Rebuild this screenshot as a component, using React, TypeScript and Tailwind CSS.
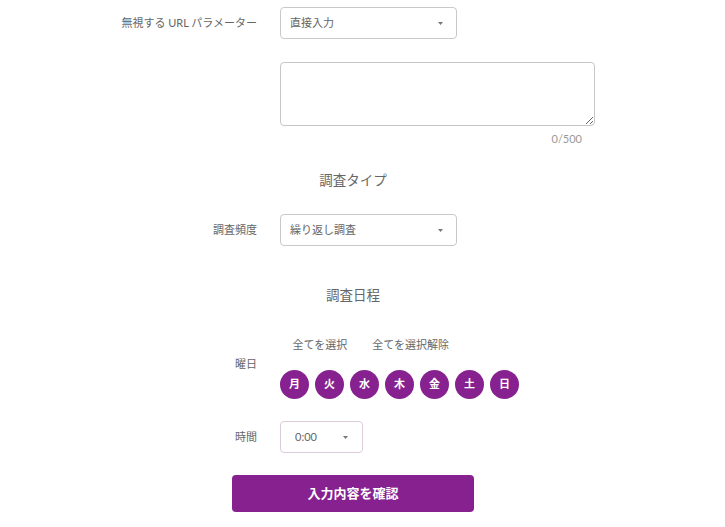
import React from "react";

const font = { fontFamily: 'Lato, "Noto Sans CJK JP", sans-serif' };

const days = ["月", "火", "水", "木", "金", "土", "日"];

function Caret() {
  return (
    <svg width="5" height="3" viewBox="0 0 5 3" className="shrink-0">
      <path d="M0 0h5L2.5 3z" fill="#777" />
    </svg>
  );
}

function Select({ value, width, className = "" }: { value: string; width: string; className?: string }) {
  return (
    <div
      className={`flex h-[32px] items-center justify-between rounded-[4px] border bg-white pl-[9px] pr-[13px] text-[11px] text-[#666] ${width} ${className}`}
    >
      <span>{value}</span>
      <Caret />
    </div>
  );
}

function Row({
  label,
  children,
  className = "",
  labelClass = "",
}: {
  label?: string;
  children: React.ReactNode;
  className?: string;
  labelClass?: string;
}) {
  return (
    <div className={`flex items-center ${className}`}>
      <div className={`w-[157px] shrink-0 text-right text-[11px] text-[#666] ${labelClass}`}>{label}</div>
      <div className="ml-[23px]">{children}</div>
    </div>
  );
}

export default function App() {
  return (
    <div className="h-[527px] w-[725px] overflow-hidden bg-white" style={font}>
      <div className="ml-[100px] w-[506px]">
        <Row label="無視する URL パラメーター" className="pt-[7px]">
          <Select value="直接入力" width="w-[177px]" className="border-[#c9c9c9]" />
        </Row>

        <Row className="mt-[23px]">
          <div>
            <textarea className="block h-[64px] w-[315px] rounded-[4px] border border-[#c6c6c6] bg-white outline-none" />
            <div className="mt-[5px] h-[16px] pr-[13px] text-right text-[11px] leading-[16px] text-[#999]">0/500</div>
          </div>
        </Row>

        <div className="mt-[23px] h-[20px] text-center text-[13.5px] leading-[20px] text-[#666]">調査タイプ</div>

        <Row label="調査頻度" className="mt-[24px]">
          <Select value="繰り返し調査" width="w-[177px]" className="border-[#c9c9c9]" />
        </Row>

        <div className="mt-[39px] h-[20px] text-center text-[13.5px] leading-[20px] text-[#666]">調査日程</div>

        <Row label="曜日" className="mt-[32px] !items-start" labelClass="mt-[19px] leading-[16px]">
          <div>
            <div className="flex h-[16px] text-[11px] leading-[16px] text-[#666]">
              <span className="px-[12.5px]">全てを選択</span>
              <span className="px-[12.5px]">全てを選択解除</span>
            </div>
            <div className="mt-[17px] flex gap-[6px]">
              {days.map((d) => (
                <div
                  key={d}
                  className="flex h-[29px] w-[29px] items-center justify-center rounded-full bg-[#86218f] text-[11px] font-bold text-white"
                >
                  {d}
                </div>
              ))}
            </div>
          </div>
        </Row>

        <Row label="時間" className="mt-[22px]">
          <div className="flex h-[32px] w-[83px] items-center justify-between rounded-[4px] border border-[#dccadd] bg-white pl-[14px] pr-[14px] text-[11px] text-[#666]">
            <span>0:00</span>
            <Caret />
          </div>
        </Row>

        <div className="mt-[22px] flex justify-center">
          <button className="h-[37px] w-[242px] rounded-[4px] bg-[#86218f] text-[13px] font-bold text-white">
            入力内容を確認
          </button>
        </div>
      </div>
    </div>
  );
}
